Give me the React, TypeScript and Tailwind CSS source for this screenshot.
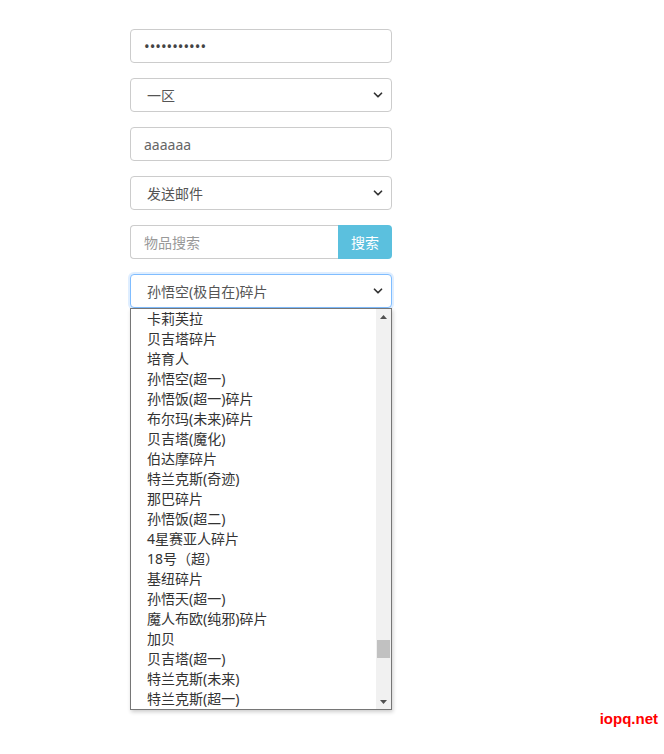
import { ChevronDown } from 'lucide-react';

const font = { fontFamily: '"Noto Sans", "Noto Sans CJK SC", sans-serif' };

const items = [
    '卡莉芙拉',
    '贝吉塔碎片',
    '培育人',
    '孙悟空(超一)',
    '孙悟饭(超一)碎片',
    '布尔玛(未来)碎片',
    '贝吉塔(魔化)',
    '伯达摩碎片',
    '特兰克斯(奇迹)',
    '那巴碎片',
    '孙悟饭(超二)',
    '4星赛亚人碎片',
    '18号（超）',
    '基纽碎片',
    '孙悟天(超一)',
    '魔人布欧(纯邪)碎片',
    '加贝',
    '贝吉塔(超一)',
    '特兰克斯(未来)',
    '特兰克斯(超一)',
];

// closed select box with chevron
const SelectBox = ({ label, focused = false }: { label: string; focused?: boolean }) => (
    <div
        className={`h-[34px] w-full flex items-center justify-between pl-[16px] pr-[6px] rounded-[4px] border bg-white text-[14px] text-[#555] ${
            focused ? 'border-[#80bdff] shadow-[0_0_0_2px_rgba(128,189,255,0.25)]' : 'border-[#ccc]'
        }`}
    >
        <span>{label}</span>
        <ChevronDown className="h-[14px] w-[14px] text-[#333]" strokeWidth={3} />
    </div>
);

const App = () => {
    return (
        <div className="relative min-h-[754px] w-[664px] bg-white" style={font}>
            <div className="flex flex-col gap-[15px] pt-[29px] pl-[130px] w-[392px]">
                <div className="h-[34px] flex items-center px-[13px] rounded-[4px] border border-[#ccc] text-[15px] text-[#444]">
                    •••••••••••
                </div>

                <SelectBox label="一区" />

                <div className="h-[34px] flex items-center px-[13px] rounded-[4px] border border-[#ccc] text-[14px] text-[#666]">
                    aaaaaa
                </div>

                <SelectBox label="发送邮件" />

                <div className="h-[34px] flex">
                    <div className="flex-1 flex items-center px-[13px] rounded-l-[4px] border border-r-0 border-[#ccc] text-[14px] text-[#999]">
                        物品搜索
                    </div>
                    <button className="w-[54px] h-full rounded-r-[4px] bg-[#5bc0de] text-white text-[14px]">
                        搜索
                    </button>
                </div>

                <div className="flex flex-col">
                    <SelectBox label="孙悟空(极自在)碎片" focused />

                    {/* open dropdown list */}
                    <div className="flex border border-[#767676] bg-white shadow-[1px_2px_4px_rgba(0,0,0,0.2)]">
                        <div className="flex-1 flex flex-col">
                            {items.map((item, i) => (
                                <div key={i} className="h-[20px] flex items-center pl-[16px] text-[14px] text-[#333] leading-none">
                                    {item}
                                </div>
                            ))}
                        </div>
                        {/* scrollbar */}
                        <div className="w-[15px] flex flex-col bg-[#f1f1f1]">
                            <div className="h-[15px] flex items-center justify-center">
                                <svg width="7" height="4" viewBox="0 0 7 4">
                                    <path d="M0 4 L3.5 0 L7 4 Z" fill="#505050" />
                                </svg>
                            </div>
                            <div className="flex-1 flex flex-col px-[1px]">
                                <div className="h-[316px]" />
                                <div className="h-[18px] bg-[#c1c1c1]" />
                            </div>
                            <div className="h-[15px] flex items-center justify-center">
                                <svg width="7" height="4" viewBox="0 0 7 4">
                                    <path d="M0 0 L3.5 4 L7 0 Z" fill="#505050" />
                                </svg>
                            </div>
                        </div>
                    </div>
                </div>
            </div>

            {/* watermark */}
            <div
                className="absolute right-[6px] top-[708px] text-[15px] font-bold text-[#f00]"
                style={{ fontFamily: '"Liberation Sans", Arial, sans-serif' }}
            >
                iopq.net
            </div>
        </div>
    );
};

export default App;
